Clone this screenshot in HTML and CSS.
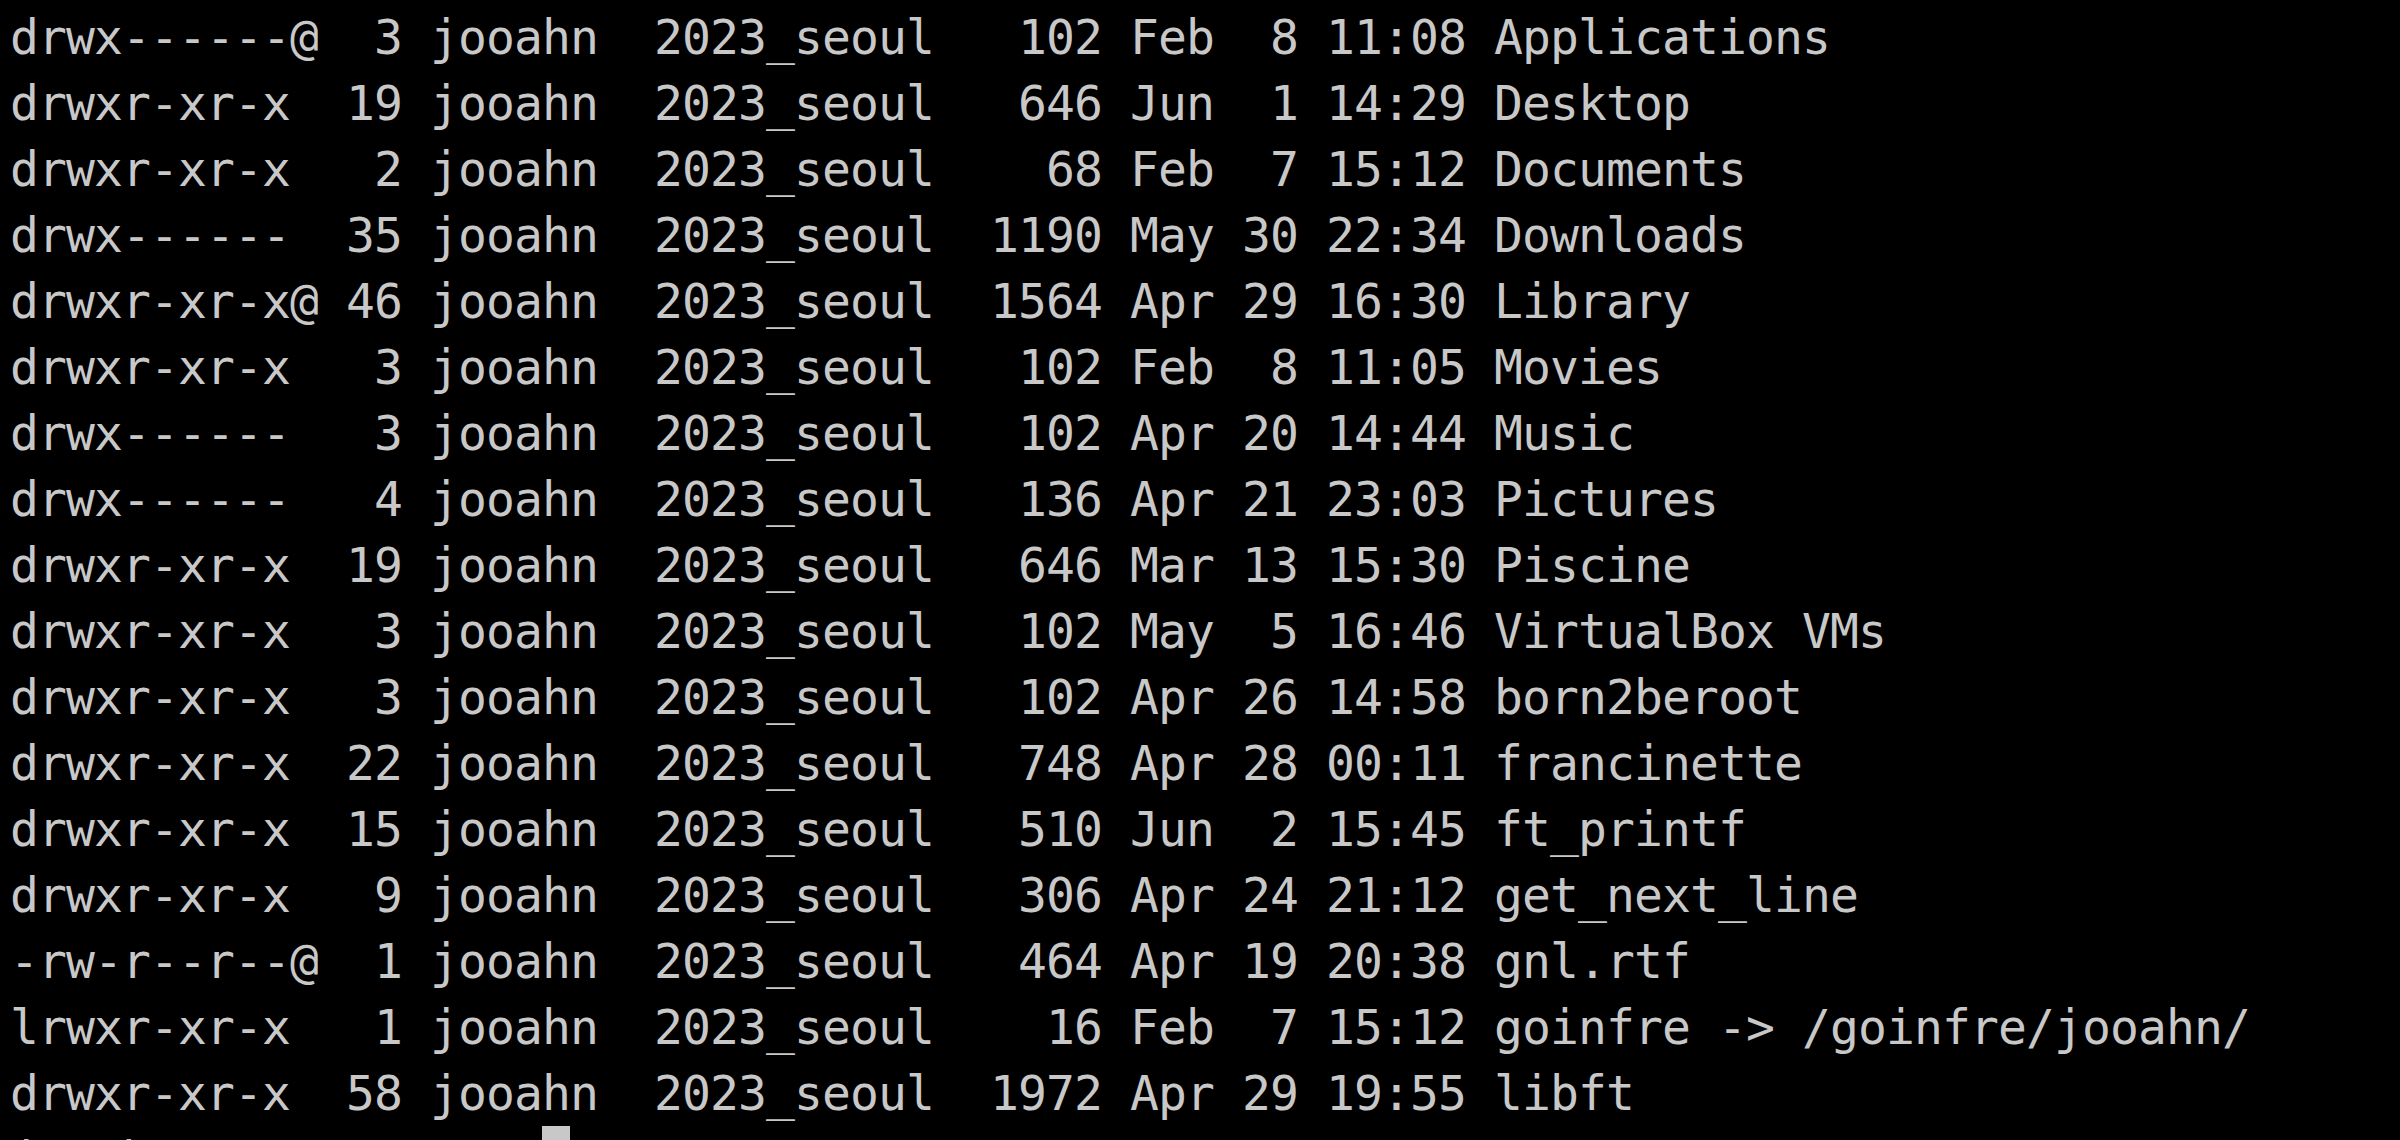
FILE: index.html
```html
<!DOCTYPE html>
<html lang="en">
<head>
<meta charset="utf-8">
<title>Terminal</title>
<link rel="stylesheet" href="styles.css">
</head>
<body>
<main class="terminal">
<div class="line">drwx------@  3 jooahn  2023_seoul   102 Feb  8 11:08 Applications</div>
<div class="line">drwxr-xr-x  19 jooahn  2023_seoul   646 Jun  1 14:29 Desktop</div>
<div class="line">drwxr-xr-x   2 jooahn  2023_seoul    68 Feb  7 15:12 Documents</div>
<div class="line">drwx------  35 jooahn  2023_seoul  1190 May 30 22:34 Downloads</div>
<div class="line">drwxr-xr-x@ 46 jooahn  2023_seoul  1564 Apr 29 16:30 Library</div>
<div class="line">drwxr-xr-x   3 jooahn  2023_seoul   102 Feb  8 11:05 Movies</div>
<div class="line">drwx------   3 jooahn  2023_seoul   102 Apr 20 14:44 Music</div>
<div class="line">drwx------   4 jooahn  2023_seoul   136 Apr 21 23:03 Pictures</div>
<div class="line">drwxr-xr-x  19 jooahn  2023_seoul   646 Mar 13 15:30 Piscine</div>
<div class="line">drwxr-xr-x   3 jooahn  2023_seoul   102 May  5 16:46 VirtualBox VMs</div>
<div class="line">drwxr-xr-x   3 jooahn  2023_seoul   102 Apr 26 14:58 born2beroot</div>
<div class="line">drwxr-xr-x  22 jooahn  2023_seoul   748 Apr 28 00:11 francinette</div>
<div class="line">drwxr-xr-x  15 jooahn  2023_seoul   510 Jun  2 15:45 ft_printf</div>
<div class="line">drwxr-xr-x   9 jooahn  2023_seoul   306 Apr 24 21:12 get_next_line</div>
<div class="line">-rw-r--r--@  1 jooahn  2023_seoul   464 Apr 19 20:38 gnl.rtf</div>
<div class="line">lrwxr-xr-x   1 jooahn  2023_seoul    16 Feb  7 15:12 goinfre -&gt; /goinfre/jooahn/</div>
<div class="line">drwxr-xr-x  58 jooahn  2023_seoul  1972 Apr 29 19:55 libft</div>
<div class="line">jooahn@c2r10s4 ~ % <span class="cursor"> </span></div>
</main>
</body>
</html>
```
FILE: styles.css
```css
html, body {
  margin: 0;
  padding: 0;
  background: #000;
}
body {
  height: 1140px;
  overflow: hidden;
}
.terminal {
  padding: 4px 0 0 10px;
  font-family: "DejaVu Sans Mono", "Liberation Mono", monospace;
  font-size: 48px;
  letter-spacing: -0.9px;
  line-height: 66px;
  color: #c8c8c8;
}
.line {
  white-space: pre;
  height: 66px;
}
.cursor {
  display: inline-block;
  width: 28px;
  height: 66px;
  vertical-align: top;
  background: #c8c8c8;
}
```
